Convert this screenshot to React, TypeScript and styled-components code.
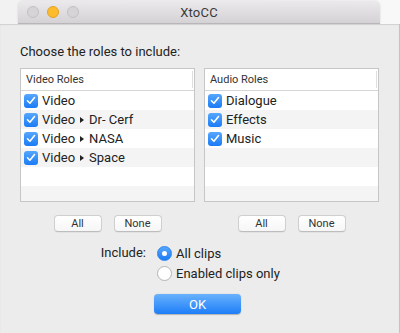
import React, { useState } from "react";
import styled, { createGlobalStyle } from "styled-components";

const GlobalStyle = createGlobalStyle`
  html, body {
    margin: 0;
    padding: 0;
    background: #f4f4f4;
  }
  body {
    font-family: "Roboto", "Liberation Sans", sans-serif;
    color: #222;
  }
`;

const Frame = styled.div`
  width: 400px;
  height: 333px;
  overflow: hidden;
  display: flex;
  flex-direction: column;
  background: linear-gradient(to right, #f2f2f2, #f8f8f8);
`;

const TitleBar = styled.div`
  height: 22px;
  margin: 1px 20px 0 18px;
  border-radius: 5px 5px 0 0;
  background: linear-gradient(#ebe9eb, #d4d2d4);
  border-bottom: 1px solid #b8b6b8;
  display: grid;
  grid-template-columns: 1fr auto 1fr;
  align-items: center;
  box-shadow: 0 0 2px rgba(0, 0, 0, 0.15);
`;

const Lights = styled.div`
  display: flex;
  gap: 8px;
  padding-left: 9px;
`;

const Light = styled.span<{ color: string; edge: string }>`
  width: 12px;
  height: 12px;
  border-radius: 50%;
  box-sizing: border-box;
  background: ${(p) => p.color};
  border: 1px solid ${(p) => p.edge};
`;

const Title = styled.div`
  font-size: 13px;
  color: #3a3a3a;
  letter-spacing: 0.2px;
`;

const Sheet = styled.div`
  flex: 1;
  background: #ececec;
  border-right: 1px solid #c4c4c4;
  box-shadow: inset 0 1px 1px rgba(0, 0, 0, 0.12);
  padding: 20px 0 0 20px;
  display: flex;
  flex-direction: column;
`;

const Prompt = styled.div`
  font-size: 13px;
  line-height: 16px;
  margin-bottom: 8px;
`;

const Panels = styled.div`
  display: flex;
  gap: 9px;
`;

const Panel = styled.div`
  width: 175px;
  display: flex;
  flex-direction: column;
  align-items: center;
`;

const Table = styled.div`
  width: 175px;
  height: 134px;
  box-sizing: border-box;
  border: 1px solid #c6c6c6;
  background: #fff;
  overflow: hidden;
`;

const Header = styled.div`
  height: 21px;
  border-bottom: 1px solid #d6d6d6;
  display: flex;
  align-items: center;
  padding-left: 5px;
  font-size: 11px;
  color: #333;
  position: relative;
  &::after {
    content: "";
    position: absolute;
    right: 1px;
    top: 2px;
    bottom: 2px;
    width: 1px;
    background: #dedede;
  }
`;

const Row = styled.div<{ odd: boolean }>`
  height: 19px;
  display: flex;
  align-items: center;
  padding-left: 3px;
  gap: 4px;
  font-size: 13px;
  background: ${(p) => (p.odd ? "#f4f4f4" : "#fff")};
`;

const Check = styled.span`
  width: 14px;
  height: 14px;
  border-radius: 3px;
  background: linear-gradient(#56a7fc, #1b7bf6);
  display: flex;
  align-items: center;
  justify-content: center;
  flex-shrink: 0;
`;

const Arrow = styled.span`
  display: inline-block;
  width: 0;
  height: 0;
  border-top: 3.5px solid transparent;
  border-bottom: 3.5px solid transparent;
  border-left: 4px solid #222;
  margin: 0 5px 0 5px;
  vertical-align: 1px;
`;

const ButtonRow = styled.div`
  display: flex;
  gap: 12px;
  margin-top: 13px;
`;

const SmallButton = styled.button`
  width: 48px;
  height: 17px;
  padding: 0;
  border: 1px solid #cfcfcf;
  border-bottom-color: #bdbdbd;
  border-radius: 4px;
  background: linear-gradient(#ffffff, #f6f6f6);
  font-family: inherit;
  font-size: 11px;
  color: #333;
  box-shadow: 0 0.5px 0.5px rgba(0, 0, 0, 0.08);
`;

const Options = styled.div`
  display: grid;
  grid-template-columns: 58px auto;
  column-gap: 11px;
  margin: 11px 0 0 68px;
`;

const Label = styled.div`
  font-size: 13px;
  line-height: 20px;
  text-align: right;
`;

const RadioList = styled.div`
  display: flex;
  flex-direction: column;
`;

const RadioRow = styled.label`
  display: flex;
  align-items: center;
  gap: 4px;
  height: 20px;
  font-size: 13px;
`;

const Radio = styled.span<{ on: boolean }>`
  width: 15px;
  height: 15px;
  box-sizing: border-box;
  border-radius: 50%;
  display: flex;
  align-items: center;
  justify-content: center;
  background: ${(p) => (p.on ? "linear-gradient(#56a7fc, #1b7bf6)" : "#fff")};
  border: 1px solid ${(p) => (p.on ? "#2a83f3" : "#b4b4b4")};
  &::after {
    content: "";
    width: 5px;
    height: 5px;
    border-radius: 50%;
    background: #fff;
    display: ${(p) => (p.on ? "block" : "none")};
  }
`;

const OkRow = styled.div`
  display: flex;
  padding-left: 134px;
  margin-top: 11px;
`;

const OkButton = styled.button`
  width: 87px;
  height: 20px;
  padding: 0;
  border: none;
  border-radius: 4px;
  background: linear-gradient(#68b1fc, #1e7ef8);
  box-shadow: 0 0.5px 1px rgba(0, 0, 0, 0.25);
  color: #fff;
  font-family: inherit;
  font-size: 13px;
`;

const Tick = () => (
  <svg width="10" height="9" viewBox="0 0 10 9">
    <path d="M1.5 4.8 L3.9 7.2 L8.5 1.5" fill="none" stroke="#fff" strokeWidth="1.6" strokeLinecap="round" strokeLinejoin="round" />
  </svg>
);

interface Role {
  parent?: string;
  name: string;
}

const videoRoles: Role[] = [
  { name: "Video" },
  { parent: "Video", name: "Dr- Cerf" },
  { parent: "Video", name: "NASA" },
  { parent: "Video", name: "Space" },
];

const audioRoles: Role[] = [{ name: "Dialogue" }, { name: "Effects" }, { name: "Music" }];

const RoleTable = ({ title, roles }: { title: string; roles: Role[] }) => {
  const rows = Array.from({ length: 6 }, (_, i) => roles[i]);
  return (
    <Table>
      <Header>{title}</Header>
      {rows.map((r, i) => (
        <Row key={i} odd={i % 2 === 1}>
          {r && (
            <>
              <Check>
                <Tick />
              </Check>
              <span>
                {r.parent && (
                  <>
                    {r.parent}
                    <Arrow />
                  </>
                )}
                {r.name}
              </span>
            </>
          )}
        </Row>
      ))}
    </Table>
  );
};

export default function App() {
  const [mode, setMode] = useState("all");

  return (
    <Frame>
      <GlobalStyle />
      <TitleBar>
        <Lights>
          <Light color="#d6d4d6" edge="#c2c0c2" />
          <Light color="#fdbc2e" edge="#e3a320" />
          <Light color="#d6d4d6" edge="#c2c0c2" />
        </Lights>
        <Title>XtoCC</Title>
        <div />
      </TitleBar>
      <Sheet>
        <Prompt>Choose the roles to include:</Prompt>
        <Panels>
          <Panel>
            <RoleTable title="Video Roles" roles={videoRoles} />
            <ButtonRow>
              <SmallButton>All</SmallButton>
              <SmallButton>None</SmallButton>
            </ButtonRow>
          </Panel>
          <Panel>
            <RoleTable title="Audio Roles" roles={audioRoles} />
            <ButtonRow>
              <SmallButton>All</SmallButton>
              <SmallButton>None</SmallButton>
            </ButtonRow>
          </Panel>
        </Panels>
        <Options>
          <Label>Include:</Label>
          <RadioList>
            <RadioRow onClick={() => setMode("all")}>
              <Radio on={mode === "all"} />
              All clips
            </RadioRow>
            <RadioRow onClick={() => setMode("enabled")}>
              <Radio on={mode === "enabled"} />
              Enabled clips only
            </RadioRow>
          </RadioList>
        </Options>
        <OkRow>
          <OkButton>OK</OkButton>
        </OkRow>
      </Sheet>
    </Frame>
  );
}
